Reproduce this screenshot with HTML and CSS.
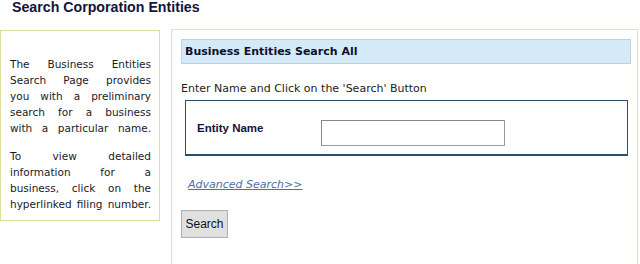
FILE: index.html
```html
<!DOCTYPE html>
<html>
<head>
<meta charset="utf-8">
<link rel="stylesheet" href="styles.css">
</head>
<body>
<h1 class="title">Search Corporation Entities</h1>
<div class="layout">
  <aside class="info">
    <p>The Business Entities<br>Search Page provides<br>you with a preliminary<br>search for a business<br>with a particular name.</p>
    <p>To view detailed<br>information for a<br>business, click on the<br>hyperlinked filing number.</p>
  </aside>
  <main class="panel">
    <div class="panel-head">Business Entities Search All</div>
    <p class="instr">Enter Name and Click on the 'Search' Button</p>
    <div class="entity-box">
      <label class="entity-label">Entity Name</label>
      <input class="entity-input" type="text">
    </div>
    <a class="adv" href="#">Advanced Search&gt;&gt;</a>
    <button class="search-btn" type="button">Search</button>
  </main>
</div>
</body>
</html>
```
FILE: styles.css
```css
html, body { margin: 0; padding: 0; background: #fff; }
body { width: 640px; height: 264px; overflow: hidden; font-family: "DejaVu Sans", Verdana, sans-serif; }
.title {
  margin: 0;
  padding: 0 0 0 12px;
  height: 29px;
  font-family: "Liberation Sans", Arial, sans-serif;
  font-size: 14.2px;
  font-weight: bold;
  line-height: 15px;
  color: #14143a;
}
.layout { display: flex; align-items: flex-start; }
.info {
  box-sizing: border-box;
  width: 160px;
  height: 191px;
  margin-top: 1px;
  border: 1px solid #dede98;
  padding: 25px 8px 0 9px;
  font-size: 10.5px;
  line-height: 16px;
  color: #1a1a2a;
  text-align: justify;
  text-align-last: justify;
}
.info p { margin: 0 0 12px 0; }
.panel {
  box-sizing: border-box;
  margin-left: 11px;
  width: 467px;
  height: 236px;
  border: 1px solid #e4e4a8;
  padding: 9px 6px 0 9px;
  display: flex;
  flex-direction: column;
  align-items: flex-start;
}
.panel-head {
  box-sizing: border-box;
  align-self: stretch;
  height: 25px;
  background: #d5eaf8;
  border: 1px solid #bfd3de;
  padding: 0 0 0 3px;
  font-size: 11px;
  font-weight: bold;
  line-height: 23px;
  color: #10102a;
}
.instr {
  margin: 18px 0 0 0;
  font-size: 11px;
  line-height: 14px;
  color: #222;
}
.entity-box {
  box-sizing: border-box;
  align-self: stretch;
  margin: 4px 3px 0 4px;
  height: 56px;
  border: 1px solid #2d4e6a;
  border-bottom-width: 2px;
  display: flex;
  align-items: flex-start;
  padding: 19px 0 0 11px;
}
.entity-label {
  width: 124px;
  font-family: "Liberation Sans", Arial, sans-serif;
  font-size: 11.5px;
  font-weight: bold;
  color: #141438;
  line-height: 14px;
  padding-top: 1px;
}
.entity-input {
  box-sizing: border-box;
  width: 184px;
  height: 26px;
  margin: 0;
  border: 1px solid #9a9a9a;
  border-top-color: #888;
  border-left-color: #888;
  background: #fff;
}
.adv {
  margin: 22px 0 0 7px;
  font-size: 11px;
  font-style: italic;
  line-height: 14px;
  color: #4b70a6;
  text-decoration: underline;
}
.search-btn {
  box-sizing: border-box;
  margin: 18px 0 0 0;
  width: 47px;
  height: 28px;
  padding: 0;
  background: #e0e0e0;
  border: 1px solid #b0b0b0;
  font-family: "Liberation Sans", Arial, sans-serif;
  font-size: 12px;
  color: #111;
}
```
